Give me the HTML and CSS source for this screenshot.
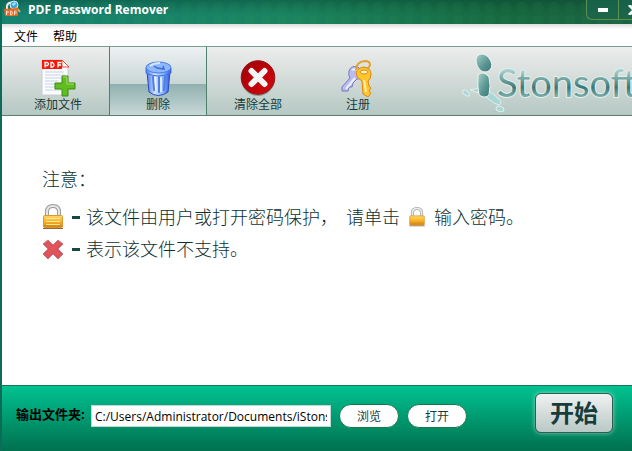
FILE: index.html
```html
<!DOCTYPE html>
<html lang="zh-CN">
<head>
    <meta charset="UTF-8">
    <meta name="viewport" content="width=device-width, initial-scale=1.0">
    <title>PDF Password Remover</title>
    <link rel="stylesheet" href="styles.css">
</head>
<body>
    <!-- Title bar -->
    <header class="title-bar">
        <svg class="app-icon" width="17" height="18" viewBox="0 0 17 18">
            <path d="M3 9V6a4 4 0 0 1 7-2" fill="none" stroke="#e8e6dc" stroke-width="2"/>
            <circle cx="10" cy="5" r="4" fill="#3fa6dc" stroke="#d9eef5"/>
            <path d="M8 4l3-2 1 2-3 2z" fill="#a5e3f7"/>
            <path d="M12 7l4 5" stroke="#e2b45c" stroke-width="2"/>
            <path d="M0 9l14-1v8H1z" fill="#e8641f"/>
            <path d="M2.500 15v-4h1q2 1 0 2h-1M6.500 11v4h1q2-2 0-4zM10.500 15v-4h2M11 13h2" fill="none" stroke="#fbd9c4"/>
        </svg>
        <h1>PDF Password Remover</h1>
        <div class="window-controls">
            <button class="control" aria-label="Minimize"><svg width="10" height="4"><rect width="10" height="4" fill="#fff"/></svg></button>
            <button class="control" aria-label="Close"><svg width="12" height="10" viewBox="0 0 12 10"><path d="M1 0l10 10M11 0L1 10" stroke="#fff" stroke-width="3"/></svg></button>
        </div>
    </header>

    <!-- Menu -->
    <nav class="menu">
        <a href="#">文件</a>
        <a href="#">帮助</a>
    </nav>

    <!-- Toolbar -->
    <div class="toolbar">
        <button class="tool">
            <svg width="36" height="38" viewBox="0 0 36 38">
                <path d="M2 1h20l6 6v29H2z" fill="#fafcff" stroke="#c9ccd2"/>
                <path d="M5 13h19M5 16h20M5 19h20M5 22h13M5 25h10M5 28h10M5 31h16" stroke="#c7d2e2"/>
                <path d="M2 1h20v9H2z" fill="#f3190b"/>
                <path d="M22 1v7h7z" fill="#fff" stroke="#e5523e"/>
                <path d="M5 8.500V3.500h2.500q2 1.500 0 3H5M11 3.500v4.500h1.500q3-2 0-4.500zM18 8.500v-5h3.500M18 6h3" fill="none" stroke="#fff" stroke-width="1.300"/>
                <path d="M22 17h6v7h7v6h-7v7h-6v-7h-7v-6h7z" fill="#62bd20" stroke="#398b13"/>
                <path d="M23 18h4v7h7" fill="none" stroke="#9ee05c"/>
            </svg>
            <span>添加文件</span>
        </button>
        <button class="tool active">
            <svg width="36" height="38" viewBox="0 0 36 38">
                <defs>
                    <linearGradient id="bin" x1="0" x2="1">
                        <stop offset="0" stop-color="#4d7bea"/><stop offset=".35" stop-color="#cfe3ff"/><stop offset=".7" stop-color="#85b4ff"/><stop offset="1" stop-color="#305bd8"/>
                    </linearGradient>
                </defs>
                <path d="M7 13l2 20q9 7 19 0l2-20z" fill="url(#bin)" stroke="#2a4cc0"/>
                <path d="M13 18l1 13M19 18v15M25 18l-1 13" stroke="#4f7de4" stroke-width="2" stroke-linecap="round"/>
                <path d="M15 18l1 13M21 18v15" stroke="#edf6ff" stroke-width="1.500"/>
                <path d="M6 9v5q12 6 25 0V9z" fill="url(#bin)" stroke="#4570e0"/>
                <ellipse cx="18.500" cy="8.500" rx="12.500" ry="5.500" fill="#8db8fd" stroke="#4a78e6"/>
                <path d="M10 7q4-3 10-3" fill="none" stroke="#d2e6ff" stroke-width="2"/>
                <path d="M14 7l3 2 7 1-1-3" fill="none" stroke="#3f6ad2" stroke-width="1.500"/>
            </svg>
            <span>删除</span>
        </button>
        <button class="tool">
            <svg width="36" height="38" viewBox="0 0 36 38">
                <defs>
                    <linearGradient id="stop" x1="0" y1="0" x2="1" y2="1">
                        <stop offset="0" stop-color="#9b0308"/><stop offset=".5" stop-color="#bd0309"/><stop offset="1" stop-color="#d30b10"/>
                    </linearGradient>
                </defs>
                <ellipse cx="18" cy="20" rx="17" ry="17" fill="#53605c" opacity=".5"/>
                <circle cx="18" cy="18.500" r="16.800" fill="url(#stop)" stroke="#8f1719"/>
                <path d="M11.500 12l13 13M24.500 12l-13 13" stroke="#f5f5f5" stroke-width="6" stroke-linecap="round"/>
            </svg>
            <span>清除全部</span>
        </button>
        <button class="tool">
            <svg width="36" height="38" viewBox="0 0 36 38">
                <path d="M18 8q-7-2-9 4-1 4 1 7l-8 9v4h6l1-4h3l1-4 4-4q6 0 7-5z" fill="#b9bbf1" stroke="#7779bd"/>
                <path d="M12 11q3-2 6 1M6 30l9-11" fill="none" stroke="#eef0ff" stroke-width="2"/>
                <path d="M16 11q0-8 9-9 5 0 5 4-1 4-7 6" fill="none" stroke="#e2a331" stroke-width="2"/>
                <path d="M16 14q1-5 8-6 7 1 7 7 0 5-3 7l1 5 2 2-2 3 2 2-3 4-5-3-1-13q-6-3-6-8z" fill="#ffc52d" stroke="#d98812"/>
                <ellipse cx="24" cy="13" rx="4" ry="2" fill="#fff0b6" stroke="#d68a19"/>
                <path d="M24 21l2 12" stroke="#fff09a" stroke-width="2"/>
            </svg>
            <span>注册</span>
        </button>
        <svg class="brand" width="190" height="66" viewBox="0 0 190 66" role="img" aria-label="iStonsoft">
            <defs>
                <linearGradient id="word" x1="0" y1="0" x2="0" y2="1">
                    <stop offset=".25" stop-color="#a9cfca"/><stop offset=".5" stop-color="#5f9693"/><stop offset=".62" stop-color="#39777a"/><stop offset=".85" stop-color="#86b7b1"/>
                </linearGradient>
                <linearGradient id="figure" x1="0" y1="0" x2="1" y2="1">
                    <stop offset="0" stop-color="#a4d1cc"/><stop offset=".6" stop-color="#58938f"/><stop offset="1" stop-color="#39777a"/>
                </linearGradient>
            </defs>
            <g fill="#a8d8d5" stroke="#e2f0ee">
                <path d="M8 41l13-3 10 7 6 5q4 4 0 6-5-1-9-5l-8-6z"/>
                <ellipse cx="4" cy="44" rx="4" ry="2" transform="rotate(40 4 44)"/>
                <ellipse cx="38" cy="60" rx="4" ry="2.500" transform="rotate(20 38 60)"/>
            </g>
            <g fill="url(#figure)" stroke="#edf5f3">
                <path d="M15 7q6-5 12 2 5 7 1 12-5 4-10 0-6-7-3-14z"/>
                <path d="M16 26q5-5 11 2 2 8 0 18-4 4-10 0-2-10-1-20z"/>
            </g>
            <text class="brand-text" x="35" y="48">Stonsoft</text>
        </svg>
    </div>

    <!-- Notes -->
    <main>
        <h2>注意：</h2>
        <div class="note">
            <svg width="22" height="26" viewBox="0 0 22 26">
                <defs>
                    <linearGradient id="gold" x1="0" y1="0" x2="0" y2="1">
                        <stop offset="0" stop-color="#ffd768"/><stop offset=".5" stop-color="#f7b52b"/><stop offset="1" stop-color="#d17c12"/>
                    </linearGradient>
                </defs>
                <path d="M5 13V8q0-6 6-6t6 6v5" fill="none" stroke="#9b9c9d" stroke-width="4"/>
                <path d="M5 13V8q0-6 6-6t6 6v5" fill="none" stroke="#e4e5e5" stroke-width="2"/>
                <rect x="1.500" y="11.500" width="19" height="12" rx="1" fill="url(#gold)" stroke="#d99a35"/>
                <path d="M4 14.500h14M4 17.500h14M4 20.500h14" stroke="#ffe690"/>
                <path d="M1 24.500h20" stroke="#8f6530"/>
            </svg>
            <b class="dash"></b>
            <p>
                <span>该文件由用户或打开密码保护，</span>
                <span>请单击</span>
                <svg width="18" height="20" viewBox="0 0 22 26">
                    <path d="M5 13V8q0-6 6-6t6 6v5" fill="none" stroke="#a5a6a6" stroke-width="4"/>
                    <path d="M5 13V8q0-6 6-6t6 6v5" fill="none" stroke="#ebebeb" stroke-width="2"/>
                    <rect x="1.500" y="11.500" width="19" height="12" rx="1" fill="url(#gold)" stroke="#d99a35"/>
                    <path d="M1 24.500h20" stroke="#8f6530"/>
                </svg>
                <span>输入密码。</span>
            </p>
        </div>
        <div class="note">
            <svg width="22" height="22" viewBox="0 0 22 22">
                <path d="M6 2l5 5 5-5 5 4-5 5 5 5-5 5-5-5-5 5-5-5 5-5-5-5z" fill="#d9545a" stroke="#c9747b"/>
                <path d="M5 6l12 11M17 5L5 17" stroke="#e2555b" stroke-width="3"/>
            </svg>
            <b class="dash"></b>
            <p><span>表示该文件不支持。</span></p>
        </div>
    </main>

    <!-- Output folder -->
    <footer>
        <label for="output">输出文件夹:</label>
        <input type="text" id="output" value="C:/Users/Administrator/Documents/iStonsoft">
        <button class="pill">浏览</button>
        <button class="pill">打开</button>
        <button class="start">开始</button>
    </footer>
</body>
</html>
```

FILE: styles.css
```css
* {
    box-sizing: border-box;
}
body {
    margin: 0;
    min-height: 100vh;
    display: flex;
    flex-direction: column;
    overflow: hidden;
    border-left: 2px solid #0d6b58;
    background: #fff;
    color: #163c3c;
    font-family: "Open Sans", "Noto Sans CJK SC", sans-serif;
    font-size: 12px;
}
button {
    padding: 0;
    color: inherit;
    font-family: inherit;
    font-size: 12px;
}
.title-bar {
    height: 24px;
    flex: none;
    display: flex;
    align-items: flex-start;
    overflow: hidden;
    background:
        radial-gradient(circle, rgba(60, 160, 100, 0.08) 5px, transparent 6px) 0 0 / 16px 14px,
        linear-gradient(rgba(0, 50, 40, 0.35), transparent 60%),
        linear-gradient(90deg, #168271, #1a8460 45%, #17693f 80%, #1c6242);
}
.app-icon {
    margin: 0 7px 0 2px;
}
h1 {
    margin: 0;
    color: #fff;
    font-size: 12px;
    line-height: 20px;
}
.window-controls {
    display: flex;
    margin: 0 -18px 0 auto;
}
.control {
    width: 32px;
    height: 20px;
    display: flex;
    align-items: center;
    justify-content: center;
    border: 1px solid #5e9054;
    border-top: none;
    background: linear-gradient(#17614a, #1c6749);
}
.control:first-child {
    border-right: none;
    border-radius: 0 0 0 6px;
}
.menu {
    height: 22px;
    flex: none;
    display: flex;
    align-items: center;
    gap: 15px;
    padding: 2px 0 0 12px;
    background: linear-gradient(#dcdcdc, #fff 5px);
}
.menu a {
    color: #000;
    text-decoration: none;
}
.toolbar {
    height: 70px;
    flex: none;
    display: flex;
    gap: 2px;
    padding-left: 7px;
    overflow: hidden;
    border-top: 1px solid #7a9c8c;
    border-bottom: 1px solid #587f71;
    background: linear-gradient(#ededed, #b6c8c3);
}
.tool {
    width: 98px;
    flex: none;
    display: flex;
    flex-direction: column;
    align-items: center;
    padding-top: 12px;
    border: none;
    background: none;
    line-height: 16px;
}
.tool.active {
    border: solid #4f7f6d;
    border-width: 0 1px;
    background: linear-gradient(#edf1f3, #c9d6d6 54%, #90b1b0 55%, #c8d8d7);
}
.brand {
    flex: none;
    margin: 2px -20px 0 auto;
}
.brand-text {
    fill: url(#word);
    stroke: #e4eeec;
    stroke-width: 2px;
    paint-order: stroke;
    font-family: Lato, sans-serif;
    font-size: 38px;
}
main {
    flex: 1;
    padding: 50px 40px 0;
    color: #0c3030;
    font-size: 18px;
    font-weight: 300;
    line-height: 26px;
}
h2 {
    margin: 0 0 9px;
    font-size: 18px;
    font-weight: 300;
    line-height: 26px;
}
.note {
    display: flex;
    align-items: center;
    min-height: 32px;
}
.dash {
    width: 8px;
    height: 3px;
    margin: 0 6px 0 8px;
    background: #17493f;
}
.note p {
    display: flex;
    align-items: center;
    gap: 8px;
    margin: 0;
    white-space: nowrap;
}
footer {
    height: 66px;
    flex: none;
    display: flex;
    align-items: flex-start;
    padding: 7px 19px 0 14px;
    border-top: 1px solid #19755c;
    background: linear-gradient(#00c291, #00704e);
}
footer label {
    width: 75px;
    margin-top: 12px;
    color: #000;
    font-size: 13px;
    font-weight: bold;
    line-height: 18px;
    white-space: nowrap;
}
footer input {
    width: 240px;
    height: 22px;
    margin: 12px 8px 0 0;
    padding: 0 3px;
    border: 1px solid #c5d5d0;
    background: #fff;
    color: #000;
    font-family: inherit;
    font-size: 12px;
}
.pill {
    width: 60px;
    height: 24px;
    margin: 11px 8px 0 0;
    border: 1px solid #117a48;
    border-radius: 12px;
    background: #fff;
}
.start {
    width: 78px;
    height: 40px;
    margin-left: auto;
    border: 1px solid #315e51;
    border-radius: 6px;
    background: linear-gradient(#f0f2f2, #d5dcdb 50%, #b9c9c6);
    box-shadow: 0 0 5px rgba(215, 255, 240, 0.6);
    font-size: 24px;
    font-weight: bold;
    line-height: 36px;
}
```
